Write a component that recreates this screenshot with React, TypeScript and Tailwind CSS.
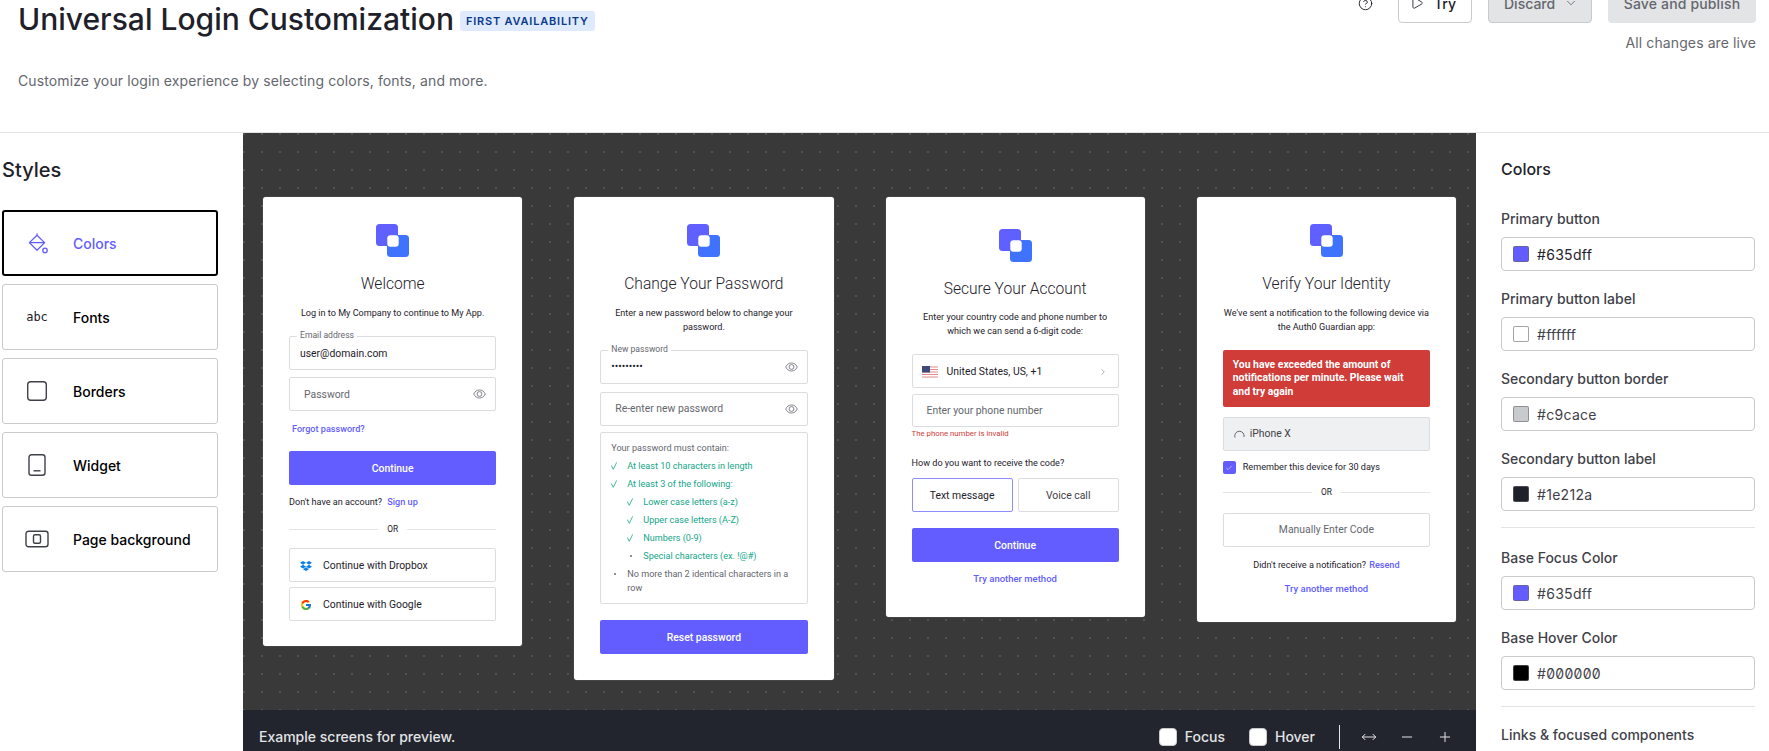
import type { ReactNode } from "react";
import { Check, ChevronDown, ChevronRight, CircleHelp, Minus, MoveHorizontal, Play, Plus } from "lucide-react";
import { FaDropbox } from "react-icons/fa";
import { FcGoogle } from "react-icons/fc";

const NAV = [
  { label: "Colors", icon: <BucketIcon />, active: true },
  { label: "Fonts", icon: <span className="font-['DejaVu_Sans_Mono',monospace] text-[12px] font-medium text-[#1e212a]">abc</span> },
  {
    label: "Borders",
    icon: (
      <svg width="22" height="22" viewBox="0 0 22 22" fill="none" stroke="#3f4148" strokeWidth="1.4">
        <rect x="1.7" y="1.7" width="18.6" height="18.6" rx="3" />
      </svg>
    ),
  },
  {
    label: "Widget",
    icon: (
      <svg width="22" height="24" viewBox="0 0 22 24" fill="none" stroke="#3f4148" strokeWidth="1.4">
        <rect x="3" y="1.7" width="16" height="20.6" rx="2.5" />
        <path d="M7.5 17.8h7" />
      </svg>
    ),
  },
  {
    label: "Page background",
    icon: (
      <svg width="24" height="18" viewBox="0 0 24 18" fill="none" stroke="#3f4148" strokeWidth="1.4">
        <rect x="1" y="1.2" width="22" height="15.6" rx="2.5" />
        <rect x="8.5" y="4.7" width="7" height="8.6" rx="1.5" />
      </svg>
    ),
  },
];

const SWATCHES = [
  [
    { label: "Primary button", value: "#635dff", swatch: "bg-[#635dff]", dark: true },
    { label: "Primary button label", value: "#ffffff", swatch: "bg-white" },
    { label: "Secondary button border", value: "#c9cace", swatch: "bg-[#c9cace]" },
    { label: "Secondary button label", value: "#1e212a", swatch: "bg-[#1e212a]" },
  ],
  [
    { label: "Base Focus Color", value: "#635dff", swatch: "bg-[#635dff]" },
    { label: "Base Hover Color", value: "#000000", swatch: "bg-black" },
  ],
];

function BucketIcon() {
  return (
    <svg width="22" height="22" viewBox="0 0 22 22" fill="none" stroke="#635dff" strokeWidth="1.3" strokeLinejoin="round" className="-ml-[2px]">
      <path d="M10 1.5v2.2M10 3.2l7.6 7.4-7.6 7.6-7.6-7.6z" />
      <path d="M2.4 10.6h15.2" />
      <circle cx="18" cy="18.4" r="2.2" />
    </svg>
  );
}

function Logo() {
  return (
    <svg width="33" height="33" viewBox="0 0 33 33" className="mx-auto block">
      <defs>
        <linearGradient id="logo-a" x1="0" y1="0" x2="1" y2="1">
          <stop offset="0" stopColor="#635dff" />
          <stop offset="1" stopColor="#5a63ff" />
        </linearGradient>
      </defs>
      <rect x="11" y="11" width="22" height="22" rx="3.5" fill="#3f72ff" />
      <rect x="0" y="0" width="22" height="22" rx="3.5" fill="url(#logo-a)" />
      <rect x="11.3" y="11.3" width="11.4" height="11.4" rx="3" fill="#fff" />
    </svg>
  );
}

function Eye() {
  return (
    <svg width="13" height="10" viewBox="0 0 13 10" fill="none" stroke="#65676e" strokeWidth="0.8" className="absolute right-[9px] top-1/2 -translate-y-1/2">
      <path d="M.7 5C2 2.300 4 1 6.500 1s4.500 1.300 5.800 4c-1.300 2.700-3.300 4-5.800 4S2 7.700.7 5z" />
      <circle cx="6.500" cy="5" r="2.400" />
    </svg>
  );
}

function Tick() {
  return (
    <svg width="6" height="8" viewBox="0 0 6 8" fill="none" stroke="#13a688" strokeWidth="0.8">
      <path d="M.2 3.500 2.300 7.300 5.700.4" />
    </svg>
  );
}

function Field({ label, value, placeholder, eye, className = "" }: { label?: string; value?: string; placeholder?: string; eye?: boolean; className?: string }) {
  return (
    <div className={`relative flex h-[34px] items-center rounded-[2px] border border-[#dcdde0] ${className}`}>
      {label && <span className="absolute -top-[8px] left-[7px] bg-white px-[3px] text-[8.600px] leading-[12px] text-[#65676e]">{label}</span>}
      {value && <span className="pt-[1px] pl-[10px] text-[10.400px] text-[#1e212a]">{value}</span>}
      {placeholder && <span className="pt-[1px] pl-[14px] text-[10.400px] text-[#65676e]">{placeholder}</span>}
      {eye && <Eye />}
    </div>
  );
}

function PrimaryButton({ children, className = "" }: { children: ReactNode; className?: string }) {
  return <div className={`flex h-[34px] items-center justify-center rounded-[2px] bg-[#635dff] pt-[1px] text-[10.400px] font-medium text-white ${className}`}>{children}</div>;
}

function Divider({ className = "" }: { className?: string }) {
  return (
    <div className={`flex h-[14px] items-center gap-[9px] ${className}`}>
      <div className="h-px flex-1 bg-[#e3e4e6]" />
      <span className="text-[8.400px] text-[#1e212a]">OR</span>
      <div className="h-px flex-1 bg-[#e3e4e6]" />
    </div>
  );
}

function Title({ children, className = "" }: { children: ReactNode; className?: string }) {
  return <h2 className={`text-center text-[15.600px] leading-[20px] font-light text-[#1e212a] ${className}`}>{children}</h2>;
}

function Sub({ children, className = "" }: { children: ReactNode; className?: string }) {
  return <p className={`text-center text-[9.100px] leading-[14px] text-[#1e212a] ${className}`}>{children}</p>;
}

function Card({ children, className = "" }: { children: ReactNode; className?: string }) {
  return <div className={`rounded-[3px] bg-white px-[26px] font-['Roboto',sans-serif] shadow-[0_0_1px_rgba(255,255,255,0.6)] ${className}`}>{children}</div>;
}

function Rule({ done, indent, children }: { done?: boolean; indent?: boolean; children: ReactNode }) {
  return (
    <div className={`mt-[4px] flex leading-[14px] ${indent ? "pl-[16px]" : ""} ${done ? "text-[#13a688]" : "text-[#65676e]"}`}>
      <span className="flex h-[14px] w-[16px] shrink-0 items-center">
        {done ? <Tick /> : <span className="ml-[3px] h-[1.5px] w-[1.5px] rounded-full bg-[#65676e]" />}
      </span>
      <span>{children}</span>
    </div>
  );
}

function LoginCard() {
  return (
    <Card className="pt-[27px] pb-[25px]">
      <Logo />
      <Title className="mt-[17px]">Welcome</Title>
      <Sub className="mt-[12px]">Log in to My Company to continue to My App.</Sub>
      <Field className="mt-[16px]" label="Email address" value="user@domain.com" />
      <Field className="mt-[7px]" placeholder="Password" eye />
      <p className="mt-[11px] pl-[3px] text-[9.100px] leading-[14px] font-medium text-[#635dff]">Forgot password?</p>
      <PrimaryButton className="mt-[15px]">Continue</PrimaryButton>
      <p className="mt-[10px] text-[9.100px] leading-[14px] text-[#1e212a]">
        Don't have an account? <span className="ml-[3px] font-medium text-[#635dff]">Sign up</span>
      </p>
      <Divider className="mt-[13px]" />
      <div className="mt-[12px] flex h-[34px] items-center rounded-[2px] border border-[#dcdde0] pt-[1px] pl-[10px] text-[10.400px] text-[#1e212a]">
        <FaDropbox size={12} className="mr-[11px] text-[#0a7fe6]" />
        Continue with Dropbox
      </div>
      <div className="mt-[5px] flex h-[34px] items-center rounded-[2px] border border-[#dcdde0] pt-[1px] pl-[10px] text-[10.400px] text-[#1e212a]">
        <FcGoogle size={12} className="mr-[11px]" />
        Continue with Google
      </div>
    </Card>
  );
}

function PasswordCard() {
  return (
    <Card className="pt-[27px] pb-[26px]">
      <Logo />
      <Title className="mt-[17px]">Change Your Password</Title>
      <Sub className="mt-[12px]">Enter a new password below to change your password.</Sub>
      <Field className="mt-[15.500px]" label="New password" value="•••••••••" eye />
      <Field className="mt-[8px]" placeholder="Re-enter new password" eye />
      <div className="mt-[6.500px] rounded-[2px] border border-[#dcdde0] px-[10px] pt-[4px] pb-[8px] text-[9.100px]">
        <div className="mt-[4px] leading-[14px] text-[#65676e]">Your password must contain:</div>
        <Rule done>At least 10 characters in length</Rule>
        <Rule done>At least 3 of the following:</Rule>
        <Rule done indent>Lower case letters (a-z)</Rule>
        <Rule done indent>Upper case letters (A-Z)</Rule>
        <Rule done indent>Numbers (0-9)</Rule>
        <div className="mt-[4px] flex pl-[16px] leading-[14px] text-[#13a688]">
          <span className="flex h-[14px] w-[16px] shrink-0 items-center">
            <span className="ml-[3px] h-[1.5px] w-[1.5px] rounded-full bg-[#65676e]" />
          </span>
          Special characters (ex. !@#)
        </div>
        <Rule>No more than 2 identical characters in a row</Rule>
      </div>
      <PrimaryButton className="mt-[16px]">Reset password</PrimaryButton>
    </Card>
  );
}

function UsFlag() {
  return (
    <svg width="16" height="12" viewBox="0 0 16 12" className="mr-[9px] shrink-0">
      <rect width="16" height="12" fill="#fff" />
      <path d="M0 1h16M0 3.500h16M0 6h16M0 8.500h16M0 11h16" stroke="#e08a8e" strokeWidth="1" />
      <rect width="8" height="6.500" fill="#3f4a7a" />
    </svg>
  );
}

function PhoneCard() {
  return (
    <Card className="pt-[32px] pb-[31px]">
      <Logo />
      <Title className="mt-[17px]">Secure Your Account</Title>
      <Sub className="mt-[12px] leading-[13.500px]!">Enter your country code and phone number to which we can send a 6-digit code:</Sub>
      <div className="relative mt-[16px] flex h-[34px] items-center rounded-[2px] border border-[#dcdde0] pt-[1px] pl-[9px] text-[10.400px] text-[#1e212a]">
        <UsFlag />
        United States, US, +1
        <ChevronRight size={10} strokeWidth={1.2} className="absolute right-[10px] text-[#65676e]" />
      </div>
      <Field className="mt-[6px] h-[33px]!" placeholder="Enter your phone number" />
      <p className="text-[7.800px] leading-[14px] text-[#d03c38]">The phone number is invalid</p>
      <p className="mt-[15px] text-[9.100px] leading-[14px] text-[#1e212a]">How do you want to receive the code?</p>
      <div className="mt-[8px] grid grid-cols-2 gap-[5px] text-[10.400px]">
        <div className="flex h-[34px] items-center justify-center rounded-[2px] border border-[#8f8cff] pt-[1px] text-[#1e212a]">Text message</div>
        <div className="flex h-[34px] items-center justify-center rounded-[2px] border border-[#dcdde0] pt-[1px] text-[#3f4148]">Voice call</div>
      </div>
      <PrimaryButton className="mt-[16px]">Continue</PrimaryButton>
      <p className="mt-[10px] text-center text-[9.500px] leading-[14px] font-medium text-[#635dff]">Try another method</p>
    </Card>
  );
}

function GuardianCard() {
  return (
    <Card className="pt-[27px] pb-[26px]">
      <Logo />
      <Title className="mt-[17px]">Verify Your Identity</Title>
      <Sub className="mt-[12px]">We've sent a notification to the following device via the Auth0 Guardian app:</Sub>
      <div className="mt-[15.500px] flex h-[57px] items-center rounded-[2px] bg-[#d03c38] pr-[20px] pl-[10px] text-[10.400px] leading-[13.300px] font-bold text-white">
        You have exceeded the amount of notifications per minute. Please wait and try again
      </div>
      <div className="mt-[10px] flex h-[34px] items-center rounded-[2px] border border-[#dcdde0] bg-[#eff0f2] pt-[1px] pl-[10px] text-[10.400px] text-[#3f4148]">
        <svg width="11" height="11" viewBox="0 0 11 11" fill="none" stroke="#65676e" strokeWidth="1" className="mr-[5px]">
          <path d="M1 8.500A4.700 4.700 0 1 1 10 8" />
        </svg>
        iPhone X
      </div>
      <div className="mt-[10px] flex h-[14px] items-center text-[9.100px] text-[#1e212a]">
        <span className="mr-[7px] flex h-[13px] w-[13px] items-center justify-center rounded-[2px] bg-[#635dff]">
          <Check size={8} strokeWidth={1.5} className="text-white" />
        </span>
        Remember this device for 30 days
      </div>
      <Divider className="mt-[11px]" />
      <div className="mt-[13px] flex h-[34px] items-center justify-center rounded-[2px] border border-[#dcdde0] pt-[1px] text-[10.400px] text-[#65676e]">Manually Enter Code</div>
      <p className="mt-[11px] text-center text-[9.100px] leading-[14px] text-[#1e212a]">
        Didn't receive a notification? <span className="ml-[1px] font-medium text-[#635dff]">Resend</span>
      </p>
      <p className="mt-[10px] text-center text-[9.500px] leading-[14px] font-medium text-[#635dff]">Try another method</p>
    </Card>
  );
}

function ColorField({ label, value, swatch, dark }: { label: string; value: string; swatch: string; dark?: boolean }) {
  return (
    <div className="mb-[16px]">
      <div className="pt-[1.500px] text-[14px] leading-[20px] font-medium text-[#3f4148]">{label}</div>
      <div className="mt-[8.500px] flex h-[34px] items-center rounded-[4px] border border-[#c9cace] pl-[11px]">
        <span className={`h-[16px] w-[16px] rounded-[2px] border border-[#65676e]/60 ${swatch}`} />
        <span className={`ml-[8px] text-[14px] tracking-[0.3px] [font-feature-settings:'zero'] ${dark ? "text-[#1e212a]" : "text-[#3f4148]"}`}>{value}</span>
      </div>
    </div>
  );
}

export default function App() {
  return (
    <div className="flex h-screen flex-col overflow-hidden bg-white font-['Inter',sans-serif]">
      <header className="flex h-[133px] shrink-0 justify-between border-b border-[#e3e4e6] pr-[13px] pl-[18px]">
        <div>
          <div className="flex items-center">
            <h1 className="text-[30px] leading-[38px] font-medium text-[#1e212a]">Universal Login Customization</h1>
            <span className="mt-[3px] ml-[6px] rounded-[3px] bg-[#dfeafc] px-[6px] text-[11px] leading-[20px] font-semibold tracking-[0.8px] text-[#0a3a8c]">FIRST AVAILABILITY</span>
          </div>
          <p className="mt-[33px] text-[14px] leading-[20px] tracking-[0.115px] text-[#65676e]">Customize your login experience by selecting colors, fonts, and more.</p>
        </div>
        <div className="-mt-[15px] flex flex-col items-end">
          <div className="flex items-center text-[14px] font-medium">
            <CircleHelp size={15} strokeWidth={1.5} className="mr-[25px] mb-[2px] text-[#1e212a]" />
            <div className="flex h-[38px] w-[74px] items-center justify-center gap-[10px] rounded-[4px] border border-[#c9cace] pr-[4px] pb-[2px] text-[#1e212a]">
              <Play size={14} strokeWidth={1.5} />
              Try
            </div>
            <div className="ml-[16px] flex h-[38px] w-[104px] items-center gap-[9px] rounded-[4px] border border-[#c9cace] bg-[#e3e4e6] pb-[2px] pl-[15px] text-[#65676e]">
              Discard
              <ChevronDown size={14} strokeWidth={1.5} />
            </div>
            <div className="ml-[16px] flex h-[38px] w-[148px] items-center justify-center rounded-[4px] bg-[#e3e4e6] pb-[2px] tracking-[0.15px] text-[#65676e]">Save and publish</div>
          </div>
          <p className="mt-[10px] text-[14px] leading-[20px] tracking-[0.1px] text-[#65676e]">All changes are live</p>
        </div>
      </header>

      <div className="flex min-h-0 flex-1">
        {/* Styles nav */}
        <aside className="w-[243px] shrink-0 pl-[2px]">
          <h3 className="mt-[25px] text-[20px] leading-[24px] font-medium text-[#1e212a]">Styles</h3>
          <div className="mt-[28px] flex w-[216px] flex-col gap-[8px]">
            {NAV.map((item) => (
              <div
                key={item.label}
                className={`flex h-[66px] items-center rounded-[3px] ${item.active ? "border-2 border-black text-[#635dff]" : "border border-[#c9cace] text-black"}`}
              >
                <span className={`flex shrink-0 justify-center ${item.active ? "w-[69px]" : "w-[70px] pr-[2px]"}`}>{item.icon}</span>
                <span className="text-[14px] font-medium">{item.label}</span>
              </div>
            ))}
          </div>
        </aside>

        {/* Preview canvas */}
        <main className="flex min-w-0 flex-1 flex-col">
          <div className="min-h-0 flex-1 overflow-hidden bg-[#393939] bg-[radial-gradient(circle_at_1px_1px,#525252_1px,transparent_1px)] bg-[size:18px_18px] px-[20px] pt-[64px]">
            <div className="grid grid-cols-4 items-start gap-[52px]">
              <LoginCard />
              <PasswordCard />
              <PhoneCard />
              <GuardianCard />
            </div>
          </div>
          <div className="flex h-[41px] shrink-0 items-center bg-[#22252e] pt-[12px] pr-[23px] pl-[16px] text-[14px] font-medium text-[#e3e4e6]">
            <span className="flex-1">Example screens for preview.</span>
            <span className="h-[18px] w-[18px] rounded-[4px] border border-[#c9cace] bg-white" />
            <span className="ml-[8px]">Focus</span>
            <span className="ml-[24px] h-[18px] w-[18px] rounded-[4px] border border-[#c9cace] bg-white" />
            <span className="ml-[8px]">Hover</span>
            <span className="mr-[21px] ml-[24px] h-[24px] w-px bg-[#e3e4e6]" />
            <MoveHorizontal size={16} strokeWidth={1.5} />
            <Minus size={16} strokeWidth={1.5} className="ml-[22px]" />
            <Plus size={16} strokeWidth={1.5} className="ml-[22px]" />
          </div>
        </main>

        {/* Colors panel */}
        <aside className="w-[293px] shrink-0 pr-[14px] pl-[25px]">
          <h3 className="mt-[24px] text-[16px] leading-[24px] font-medium text-[#1e212a]">Colors</h3>
          <div className="mt-[26px]">
            {SWATCHES[0].map((s) => (
              <ColorField key={s.label} {...s} />
            ))}
          </div>
          <div className="mb-[18px] h-px bg-[#e3e4e6]" />
          {SWATCHES[1].map((s) => (
            <ColorField key={s.label} {...s} />
          ))}
          <div className="mb-[18px] h-px bg-[#e3e4e6]" />
          <div className="text-[14px] leading-[20px] font-medium text-[#3f4148]">Links &amp; focused components</div>
        </aside>
      </div>
    </div>
  );
}
